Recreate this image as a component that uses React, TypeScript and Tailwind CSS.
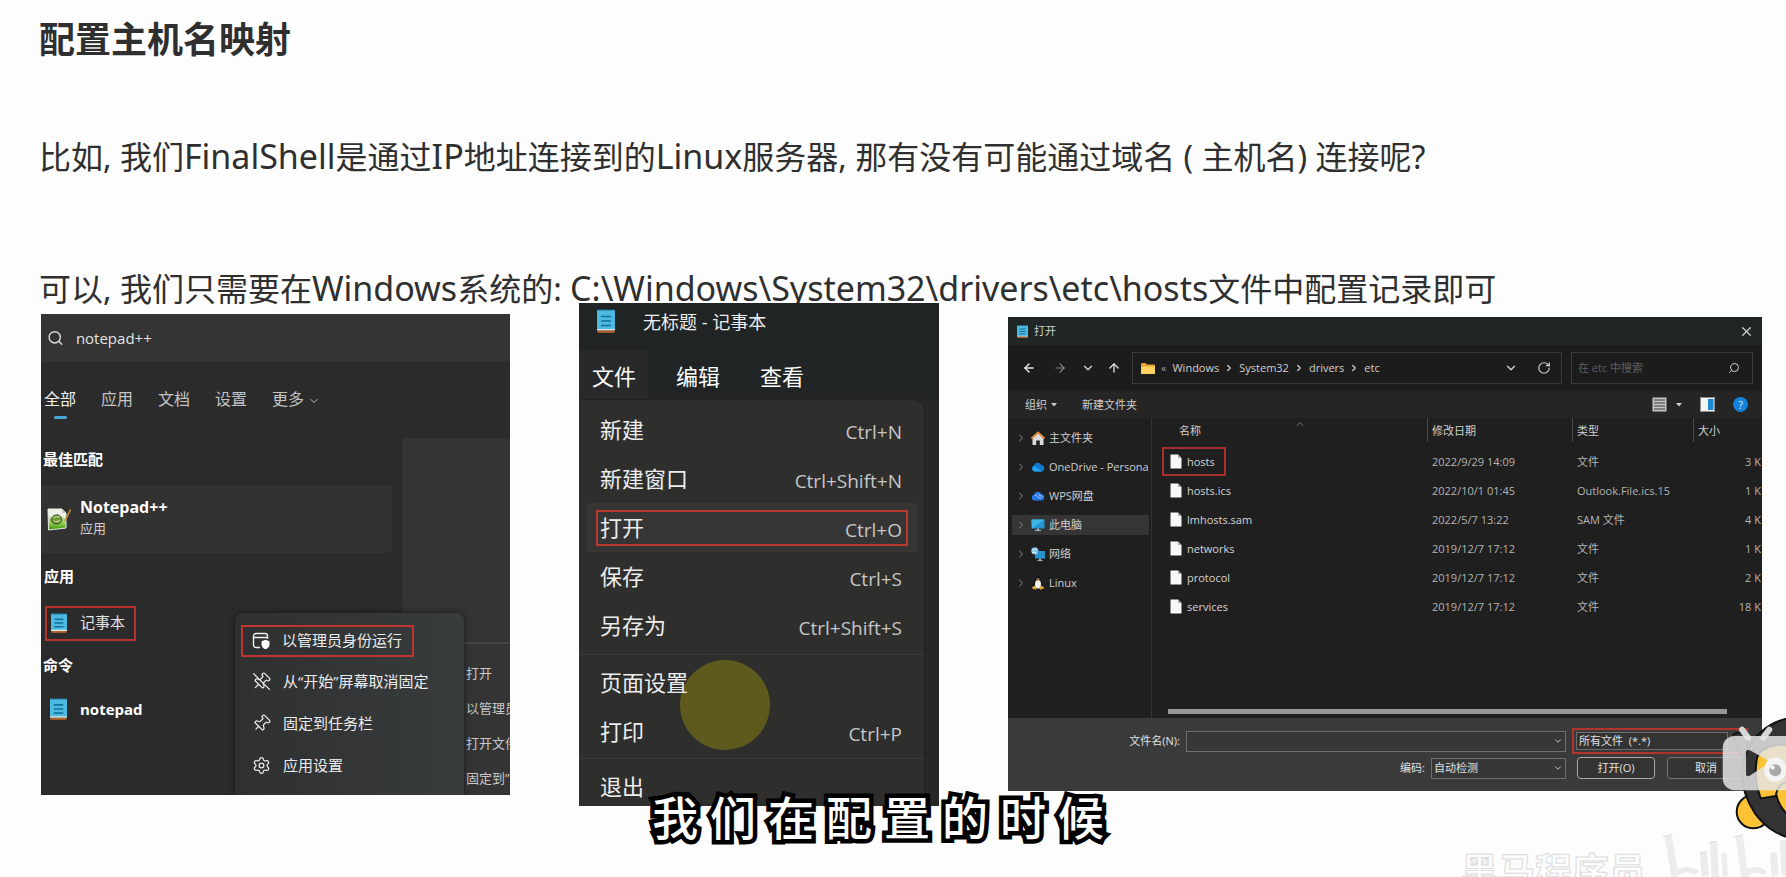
import type { ReactNode } from "react";
import {
  ArrowLeft,
  ArrowRight,
  ArrowUp,
  ChevronDown,
  ChevronRight,
  ChevronUp,
  Pin,
  RotateCw,
  Search,
  Settings,
  X,
} from "lucide-react";

const uiFont = "font-['Open_Sans','Noto_Sans_CJK_SC',sans-serif]";

function NotepadIcon({ className }: { className: string }) {
  return (
    <svg viewBox="0 0 18 24" className={className} preserveAspectRatio="none" aria-hidden="true">
      <rect x="0" y="1" width="18" height="20" fill="#4db8e0" />
      <rect x="0" y="20" width="18" height="1.6" fill="#d9e6ea" />
      <rect x="0.5" y="21.6" width="17" height="2.2" fill="#b5652b" />
      <path d="M1 1h16" stroke="#176f97" strokeWidth="2" strokeDasharray="1.4 1.6" />
      <path d="M4 7.5h10M4 12h10M4 16.5h10" stroke="#12709c" strokeWidth="1.7" />
    </svg>
  );
}

function NotepadPlusIcon() {
  return (
    <svg viewBox="0 0 24 24" className="h-6 w-6" aria-hidden="true">
      <defs>
        <linearGradient id="npp" x1="0" y1="0" x2="0" y2="1">
          <stop offset="0.3" stopColor="#eef2ea" />
          <stop offset="0.75" stopColor="#7ec23a" />
          <stop offset="1" stopColor="#2f8d14" />
        </linearGradient>
      </defs>
      <path d="M1 2h14l4 4v15L1.500 23z" fill="url(#npp)" stroke="#e8ebe4" strokeWidth="1" />
      <path d="M15 2l4 4h-4z" fill="#bfc8ba" />
      <path d="M4 13c1-5 7-7 10-3 2 3 0 7-4 7-3 0-5-1-6-4z" fill="#6f9b35" stroke="#3c4f20" strokeWidth="1" />
      <path d="M6 11c2-1 4-2 7-1M7 14c2 1 4 1 6-1" stroke="#dce8c8" strokeWidth="1" fill="none" />
      <path d="M23.500 2.500L18 14" stroke="#c98a2b" strokeWidth="1.600" />
    </svg>
  );
}

function AdminIcon() {
  return (
    <svg viewBox="0 0 18 18" className="h-[18px] w-[18px]" fill="none" stroke="#f0f0f0" strokeWidth="1.4" aria-hidden="true">
      <path d="M8 15.500H4A2.500 2.500 0 0 1 1.500 13V4A2.500 2.500 0 0 1 4 1.500h9A2.500 2.500 0 0 1 15.500 4v3M1.500 5.500h14" />
      <path d="M13.500 7.800l4 1.400v3.200c0 2.300-1.700 3.900-4 4.800-2.300-.9-4-2.500-4-4.800V9.200z" fill="#fff" stroke="none" />
    </svg>
  );
}

function UnpinIcon() {
  return (
    <svg
      viewBox="0 0 24 24"
      className="h-[19px] w-[19px]"
      fill="none"
      stroke="currentColor"
      strokeWidth="1.6"
      strokeLinecap="round"
      strokeLinejoin="round"
      aria-hidden="true"
    >
      <g transform="rotate(45 12 12)">
        <path d="M12 17v6" />
        <path d="M9 10.760a2 2 0 0 1-1.110 1.790l-1.780.9A2 2 0 0 0 5 15.240V16a1 1 0 0 0 1 1h12a1 1 0 0 0 1-1v-.76a2 2 0 0 0-1.110-1.790l-1.780-.9A2 2 0 0 1 15 10.760V7a1 1 0 0 1 1-1 2 2 0 0 0 0-4H8a2 2 0 0 0 0 4 1 1 0 0 1 1 1z" />
      </g>
      <path d="M2 2l20 20" />
    </svg>
  );
}

function FileIcon() {
  return (
    <svg viewBox="0 0 12 15" className="h-[15px] w-3 shrink-0" aria-hidden="true">
      <path d="M0.500 0.500h7.500l3.500 3.500v10.500h-11z" fill="#f7f7f7" />
      <path d="M8 0.500v3.500h3.500z" fill="#a9a9a9" />
    </svg>
  );
}

function HomeIcon() {
  return (
    <svg viewBox="0 0 14 14" className="h-3.5 w-3.5" aria-hidden="true">
      <path d="M1.500 6.500L7 2l5.500 4.500V14H8.800V9.500H5.200V14H1.500z" fill="#dcdcdc" />
      <path d="M0.500 7.500L7 1.500l6.500 6" fill="none" stroke="#e08a3a" strokeWidth="2" />
    </svg>
  );
}

function CloudIcon() {
  return (
    <svg viewBox="0 0 14 10" className="h-2.5 w-3.5" aria-hidden="true">
      <path d="M3.500 9.500a3 3 0 0 1-.6-5.900A4 4 0 0 1 10.300 3a3.300 3.300 0 0 1 .4 6.500z" fill="#1179cf" />
      <path d="M3.500 9.500a3 3 0 0 1 0-5.500l7.500 5.500z" fill="#28a0ea" />
    </svg>
  );
}

function WpsIcon() {
  return (
    <svg viewBox="0 0 14 10" className="h-2.5 w-3.5" aria-hidden="true">
      <path d="M3.500 9.500a3 3 0 0 1-.6-5.900A4 4 0 0 1 10.300 3a3.300 3.300 0 0 1 .4 6.500z" fill="#2478e8" />
      <path d="M4 4.500c2-1 3 3 6 2.500M7 2.500c1 2 3 2 5 3.500" fill="none" stroke="#a8d0ff" strokeWidth="1" />
    </svg>
  );
}

function MonitorIcon() {
  return (
    <svg viewBox="0 0 14 12" className="h-3 w-3.5" aria-hidden="true">
      <rect x="0.500" y="0.500" width="13" height="9" rx="0.500" fill="#2493cf" />
      <path d="M0.500 0.500h13L1 9.500z" fill="#3db4e4" />
      <path d="M6 9.500h2v1.500h2v1H4v-1h2z" fill="#9fb7c2" />
    </svg>
  );
}

function NetworkIcon() {
  return (
    <svg viewBox="0 0 14 14" className="h-3.5 w-3.5" aria-hidden="true">
      <rect x="4" y="4" width="10" height="7.500" fill="#2493cf" />
      <path d="M8 11.500h2v1.500h1.500v1h-5v-1H8z" fill="#9fb7c2" />
      <circle cx="3.800" cy="3.800" r="3.600" fill="#7fc0e4" />
      <path d="M1 2.500c2 1 3 0 5-.5M1 5.500l3-.5 1 2" stroke="#e8f5fb" strokeWidth="1" fill="none" />
    </svg>
  );
}

function TuxIcon() {
  return (
    <svg viewBox="0 0 14 14" className="h-3.5 w-3.5" aria-hidden="true">
      <path d="M7 0.500c1.800 0 2.300 1.500 2.300 3.200 0 1.600 2.200 3.300 2.200 6.300 0 2-2 3-4.500 3s-4.500-1-4.500-3c0-3 2.200-4.700 2.200-6.300C4.700 2 5.200 0.500 7 0.500z" fill="#0c0c0c" />
      <ellipse cx="7" cy="8.200" rx="3" ry="4.300" fill="#f2f2f2" />
      <path d="M5.500 3.800h3L7 5.800z" fill="#f0b429" />
      <path d="M0.500 12l3-2.500 2.300 3-1 1.200zM13.500 12l-3-2.500-2.300 3 1 1.200z" fill="#e8ab2e" />
      <circle cx="6.200" cy="2.800" r="0.600" fill="#fff" />
      <circle cx="7.800" cy="2.800" r="0.600" fill="#fff" />
    </svg>
  );
}

function FolderIcon() {
  return (
    <svg viewBox="0 0 14 11" className="h-[11px] w-3.5" aria-hidden="true">
      <path d="M0 1a1 1 0 0 1 1-1h3.500L6 1.500h7a1 1 0 0 1 1 1V10a1 1 0 0 1-1 1H1a1 1 0 0 1-1-1z" fill="#e0a52f" />
      <path d="M0 3.500h14V10a1 1 0 0 1-1 1H1a1 1 0 0 1-1-1z" fill="#fbd160" />
    </svg>
  );
}

function Triangle() {
  return (
    <svg viewBox="0 0 6 4" className="h-1 w-1.5" aria-hidden="true">
      <path d="M0 0h6L3 3.500z" fill="#cfcfcf" />
    </svg>
  );
}

const tabs = ["应用", "文档", "设置"];

function PopupItem({ icon, label }: { icon: ReactNode; label: string }) {
  return (
    <button type="button" className="flex h-[42px] w-full items-center gap-3 whitespace-nowrap pl-[17px] text-left">
      {icon}
      {label}
    </button>
  );
}

function SearchPanel() {
  return (
    <section className={`relative mt-[11px] h-[481px] overflow-hidden bg-[#2b2b2b] text-[15px] text-[#e3e3e3] ${uiFont}`}>
      <label className="flex h-12 items-center gap-3 bg-[#343434] pl-1.5">
        <Search className="h-[18px] w-[18px] text-[#dcdcdc]" strokeWidth={2} />
        <input aria-label="搜索" defaultValue="notepad++" className="w-full bg-transparent text-[15px] font-medium outline-none" />
      </label>
      <nav className="mt-6 flex gap-[25px] pl-[3px] text-base leading-[26px] text-[#c4c4c4]">
        <button type="button" className="flex flex-col items-center gap-1 text-[#f2f2f2]">
          全部
          <span className="h-[3px] w-[13px] rounded-full bg-[#4aa8d8]" />
        </button>
        {tabs.map((tab) => (
          <button key={tab} type="button" className="self-start">
            {tab}
          </button>
        ))}
        <button type="button" className="flex items-center gap-1 self-start">
          更多
          <ChevronDown className="mt-1 h-3 w-3" strokeWidth={2} />
        </button>
      </nav>

      <div className="mt-[19px] flex">
        <div className="w-[351px] shrink-0 pt-2.5">
          <h2 className="pl-0.5 font-bold leading-[22px] text-white">最佳匹配</h2>
          <button type="button" className="mt-[15px] flex h-[68px] w-full items-center gap-[9px] rounded-r bg-[#323232] pl-1.5 text-left">
            <NotepadPlusIcon />
            <span className="pb-1">
              <span className="block text-base font-bold leading-[22px] text-white">Notepad++</span>
              <span className="block text-[13px] leading-5 text-[#cfcfcf]">应用</span>
            </span>
          </button>
          <h2 className="mt-3 pl-[3px] font-bold leading-[22px] text-white">应用</h2>
          <button type="button" className="ml-1 mt-[19px] flex h-[35px] w-[91px] items-center gap-[13px] border-2 border-[#b8322d] pb-0.5 pl-1">
            <NotepadIcon className="h-5 w-4" />
            记事本
          </button>
          <h2 className="mt-[13px] pl-0.5 font-bold leading-[22px] text-white">命令</h2>
          <button type="button" className="mt-4 flex h-[34px] items-center gap-[13px] pl-[9px] font-bold text-white">
            <NotepadIcon className="h-[22px] w-[17px]" />
            notepad
          </button>
        </div>
        <div className="ml-2.5 h-[357px] flex-1 overflow-hidden whitespace-nowrap rounded-tl bg-[#343434]">
          <div className="h-[206px] border-b-2 border-[#434343]" />
          <ul className="mt-3 pl-[64px] text-[13px] leading-[35px] text-[#c8c8c8]">
            <li>打开</li>
            <li>以管理员</li>
            <li>打开文件</li>
            <li>固定到”</li>
          </ul>
        </div>
      </div>

      <div className="absolute left-[194px] top-[299px] h-[190px] w-[229px] rounded-lg bg-gradient-to-r from-[#2f3030] to-[#383c3d] pt-[7px] text-[#ececec] shadow-[0_0_6px_rgba(0,0,0,0.5)]">
        <button type="button" className="mb-[3px] ml-1.5 mt-[5px] flex h-8 w-[173px] items-center gap-3 whitespace-nowrap border-2 border-[#c0352f] pb-px pl-[9px]">
          <AdminIcon />
          以管理员身份运行
        </button>
        <PopupItem icon={<UnpinIcon />} label="从“开始”屏幕取消固定" />
        <PopupItem icon={<Pin className="h-[19px] w-[19px] rotate-45" strokeWidth={1.6} />} label="固定到任务栏" />
        <PopupItem icon={<Settings className="h-[19px] w-[19px]" strokeWidth={1.6} />} label="应用设置" />
      </div>
    </section>
  );
}

function MenuItem({ label, keys }: { label: string; keys?: string }) {
  return (
    <button type="button" className="flex h-[49px] w-full items-center justify-between pl-[21px] pr-[22px]">
      <span>{label}</span>
      <span className="pt-1.5 text-[19px] text-[#c6c6c6]">{keys}</span>
    </button>
  );
}

function NotepadPanel() {
  return (
    <section className={`relative h-[503px] overflow-hidden bg-[#202425] text-[22px] text-[#ededed] ${uiFont}`}>
      <header className="flex h-[47px] items-start gap-7 pl-[18px] pt-1.5 text-lg leading-[26px]">
        <NotepadIcon className="h-6 w-[18px]" />
        <span>无标题 - 记事本</span>
      </header>
      <nav className="flex h-[49px] gap-10 text-[22px] text-white">
        <button type="button" className="-mr-3 bg-[#27292b] pl-[13px] pr-3 pt-1">
          文件
        </button>
        <button type="button" className="pt-1">
          编辑
        </button>
        <button type="button" className="pt-1">
          查看
        </button>
      </nav>
      <div className="h-full bg-[#272727] pr-3.5">
        <div className="relative h-full rounded-tr-xl border-r border-t border-[#222] bg-[#2e2e2d] pt-[5px]">
          <span className="absolute left-[101px] top-[260px] h-[90px] w-[90px] rounded-full bg-[#5e5a1e]" />
          <div className="relative">
            <MenuItem label="新建" keys="Ctrl+N" />
            <MenuItem label="新建窗口" keys="Ctrl+Shift+N" />
            <div className="ml-[7px] mr-1.5 flex h-[49px] items-center rounded bg-[#353535] px-2.5">
              <button type="button" className="flex h-9 w-full items-center justify-between border-2 border-[#bd3a32] pl-0.5 pr-1">
                <span>打开</span>
                <span className="pt-1.5 text-[19px] text-[#c6c6c6]">Ctrl+O</span>
              </button>
            </div>
            <MenuItem label="保存" keys="Ctrl+S" />
            <MenuItem label="另存为" keys="Ctrl+Shift+S" />
            <hr className="mt-1 border-[#3b3b3b]" />
            <div className="pt-[3px]">
              <MenuItem label="页面设置" />
              <MenuItem label="打印" keys="Ctrl+P" />
            </div>
            <hr className="mt-0.5 border-[#3b3b3b]" />
            <div className="pt-[3px]">
              <MenuItem label="退出" />
            </div>
          </div>
        </div>
      </div>
    </section>
  );
}

const places = [
  { label: "主文件夹", icon: <HomeIcon /> },
  { label: "OneDrive - Persona", icon: <CloudIcon /> },
  { label: "WPS网盘", icon: <WpsIcon /> },
  { label: "此电脑", icon: <MonitorIcon />, active: true },
  { label: "网络", icon: <NetworkIcon /> },
  { label: "Linux", icon: <TuxIcon /> },
];

const files = [
  { name: "hosts", date: "2022/9/29 14:09", type: "文件", size: "3 K", marked: true },
  { name: "hosts.ics", date: "2022/10/1 01:45", type: "Outlook.File.ics.15", size: "1 K" },
  { name: "lmhosts.sam", date: "2022/5/7 13:22", type: "SAM 文件", size: "4 K" },
  { name: "networks", date: "2019/12/7 17:12", type: "文件", size: "1 K" },
  { name: "protocol", date: "2019/12/7 17:12", type: "文件", size: "2 K" },
  { name: "services", date: "2019/12/7 17:12", type: "文件", size: "18 K" },
];

const crumbs = ["Windows", "System32", "drivers", "etc"];

function OpenDialog() {
  return (
    <section className={`mt-3.5 flex h-[474px] flex-col overflow-hidden bg-[#1f1f1f] text-[11px] leading-4 text-[#cfcfcf] ${uiFont}`}>
      <header className="flex h-7 shrink-0 items-center bg-[#202526] pl-[9px] pr-2">
        <NotepadIcon className="h-[13px] w-[11px]" />
        <span className="ml-1.5 flex-1">打开</span>
        <button type="button" aria-label="关闭">
          <X className="h-[15px] w-[15px]" strokeWidth={2} />
        </button>
      </header>

      <div className="flex h-[46px] shrink-0 items-center bg-[#1c1c1c] pl-3.5 pr-[9px]">
        <button type="button" aria-label="后退">
          <ArrowLeft className="h-3.5 w-3.5 text-[#e8e8e8]" strokeWidth={2.4} />
        </button>
        <button type="button" aria-label="前进" className="ml-[17px]">
          <ArrowRight className="h-3.5 w-3.5 text-[#8a8a8a]" strokeWidth={2} />
        </button>
        <button type="button" aria-label="最近" className="ml-3.5">
          <ChevronDown className="h-3.5 w-3.5" strokeWidth={2.4} />
        </button>
        <button type="button" aria-label="向上" className="ml-3">
          <ArrowUp className="h-3.5 w-3.5 text-[#e8e8e8]" strokeWidth={2.2} />
        </button>
        <div className="ml-[11px] flex h-8 flex-1 items-center border border-[#3b3b3b] pl-2 pr-2.5">
          <FolderIcon />
          <span className="ml-1.5 mr-1.5 text-[#9a9a9a]">«</span>
          {crumbs.map((crumb, index) => (
            <span key={crumb} className="flex items-center font-medium">
              {index > 0 && <ChevronRight className="mx-[5px] h-2.5 w-2.5" strokeWidth={3} />}
              {crumb}
            </span>
          ))}
          <button type="button" aria-label="展开" className="ml-auto">
            <ChevronDown className="h-3.5 w-3.5" strokeWidth={2.4} />
          </button>
          <button type="button" aria-label="刷新" className="ml-[19px]">
            <RotateCw className="h-3.5 w-3.5" strokeWidth={2} />
          </button>
        </div>
        <label className="ml-[9px] flex h-8 w-[182px] items-center border border-[#3b3b3b] pl-1.5 pr-3">
          <input aria-label="搜索" placeholder="在 etc 中搜索" className="w-full min-w-0 bg-transparent outline-none placeholder:text-[#5f5f5f]" />
          <Search className="h-3 w-3 shrink-0 -scale-x-100" strokeWidth={2} />
        </label>
      </div>

      <div className="flex h-[27px] shrink-0 items-center bg-[#252525] pl-[17px] pr-3.5">
        <button type="button" className="flex items-center gap-1">
          组织 <Triangle />
        </button>
        <button type="button" className="ml-[25px]">
          新建文件夹
        </button>
        <button type="button" aria-label="视图" className="ml-auto flex items-center gap-[9px]">
          <svg viewBox="0 0 15 15" className="h-[15px] w-[15px]" aria-hidden="true">
            <rect x="0.500" y="0.500" width="14" height="14" fill="#c4c4c4" />
            <path d="M2 3h11M2 6h11M2 9h11M2 12h11" stroke="#3a3a3a" strokeWidth="1" />
          </svg>
          <Triangle />
        </button>
        <button type="button" aria-label="预览窗格" className="ml-[18px]">
          <svg viewBox="0 0 15 15" className="h-[15px] w-[15px]" aria-hidden="true">
            <rect x="0.500" y="0.500" width="14" height="14" fill="#f5f5f5" stroke="#8f8f8f" />
            <rect x="8" y="2" width="5.500" height="11" fill="#1c86d1" />
          </svg>
        </button>
        <button type="button" aria-label="帮助" className="ml-[18px] h-[15px] w-[15px] rounded-full bg-[#1382dc] leading-[15px] text-[#d8ecfb]">
          ?
        </button>
      </div>

      <div className="flex flex-1">
        <ul className="w-[144px] shrink-0 border-r border-[#333] pt-[5px]">
          {places.map((place) => (
            <li key={place.label} className="flex h-[29px] items-center pl-1 pr-0.5">
              <button
                type="button"
                className={`flex h-5 w-full items-center overflow-hidden whitespace-nowrap pl-[3px] ${place.active ? "bg-[#353535]" : ""}`}
              >
                <ChevronRight className="h-3 w-3 shrink-0 text-[#8b8b8b]" strokeWidth={2} />
                <span className="ml-1 mr-1 flex w-3.5 shrink-0 justify-center">{place.icon}</span>
                {place.label}
              </button>
            </li>
          ))}
        </ul>
        <div className="relative flex min-w-0 flex-1 flex-col">
          <ChevronUp className="absolute left-[142px] top-0 h-3 w-3 text-[#8f8f8f]" strokeWidth={1.6} />
          <table className="w-full table-fixed border-collapse">
            <colgroup>
              <col />
              <col className="w-[145px]" />
              <col className="w-[121px]" />
              <col className="w-[69px]" />
            </colgroup>
            <thead>
              <tr className="text-left">
                <th className="h-[29px] p-0 align-top font-normal">
                  <div className="flex h-6 items-center pl-[27px] pt-0.5">名称</div>
                </th>
                {["修改日期", "类型", "大小"].map((heading) => (
                  <th key={heading} className="p-0 align-top font-normal">
                    <div className="flex h-6 items-center border-l border-[#4a4a4a] pl-1 pt-0.5">{heading}</div>
                  </th>
                ))}
              </tr>
            </thead>
            <tbody className="text-[#b4b4b4]">
              {files.map((file) => (
                <tr key={file.name}>
                  <td className="p-0">
                    <span
                      className={`ml-2.5 flex h-[29px] w-fit items-center gap-[5px] border-2 pl-1.5 pr-[9px] text-[#d4d4d4] ${
                        file.marked ? "border-[#a82e2b]" : "border-transparent"
                      }`}
                    >
                      <FileIcon />
                      {file.name}
                    </span>
                  </td>
                  <td className="p-0 pl-[5px]">{file.date}</td>
                  <td className="p-0 pl-[5px]">{file.type}</td>
                  <td className="p-0 pr-px text-right">{file.size}</td>
                </tr>
              ))}
            </tbody>
          </table>
          <div className="mb-1 ml-4 mr-[35px] mt-auto h-[5px] bg-[#979797]" />
        </div>
      </div>

      <footer className="h-[73px] shrink-0 bg-[#3a3a3a] pt-2.5 text-[#e0e0e0]">
        <div className="flex h-[26px] items-center pr-3.5">
          <label htmlFor="file-name" className="w-[172px] text-right">
            文件名(N):
          </label>
          <div className="ml-1.5 flex h-[21px] flex-1 items-center border border-[#6e6e6e] bg-[#373737] pr-0.5">
            <input id="file-name" className="w-full min-w-0 bg-transparent px-1 outline-none" />
            <ChevronDown className="h-2.5 w-2.5 shrink-0" strokeWidth={2} />
          </div>
          <div className="ml-1.5 h-[26px] w-[176px] border-2 border-[#b2322e] p-0.5 pr-[18px]">
            <select aria-label="文件类型" className="block h-full w-full appearance-none border border-[#6e6e6e] bg-[#333] pl-0.5 leading-4">
              <option>所有文件&nbsp; (*.*)</option>
            </select>
          </div>
        </div>
        <div className="mt-[3px] flex h-[22px] items-center justify-end pr-[17px]">
          <label htmlFor="encoding">编码:</label>
          <div className="ml-1.5 flex h-[21px] w-[135px] items-center border border-[#6e6e6e] bg-[#373737] pr-0.5">
            <select id="encoding" className="w-full appearance-none bg-transparent pl-0.5">
              <option>自动检测</option>
            </select>
            <ChevronDown className="h-2.5 w-2.5 shrink-0" strokeWidth={2} />
          </div>
          <button type="button" className="ml-[11px] h-[22px] w-[78px] rounded border border-[#a8a8a8] bg-[#333]">
            打开(O)
          </button>
          <button type="button" className="ml-3 h-[22px] w-[78px] rounded border border-[#777] bg-[#333]">
            取消
          </button>
        </div>
      </footer>
    </section>
  );
}

function Mascot() {
  return (
    <svg viewBox="840 80 198 370" className="absolute right-0 top-[717px] h-[123px] w-[66px]" aria-hidden="true">
      <circle cx="940" cy="365" r="50" fill="#fbc235" stroke="#111" strokeWidth="6" />
      <path d="M1050 83C985 95 935 140 915 195c-20 60-5 120 30 175 30 40 60 60 105 74z" fill="#333" stroke="#111" strokeWidth="6" />
      <path d="M925 140c-15-14-32-16-45-8 5 30 12 55 35 72z" fill="#333" stroke="#111" strokeWidth="5" />
      <path d="M1050 165c-45-5-85 5-98 35-10 45-2 90 10 125l48-8c5 22 15 42 40 62z" fill="#fbc235" stroke="#111" strokeWidth="6" />
      <path d="M1008 318c2-28 15-40 40-45" fill="none" stroke="#111" strokeWidth="6" />
      <path d="M906 118l18 24M988 118l-18 24" stroke="#d6d6d6" strokeWidth="18" strokeLinecap="round" />
      <path
        fillRule="evenodd"
        fill="#e6e6e6"
        fillOpacity="0.84"
        d="M883 137H1050V300H883a35 35 0 0 1-35-35V172a35 35 0 0 1 35-35zM918 188v62q0 12 11 7l54-36q6-5 0-11l-52-29q-13-5-13 7z"
      />
      <ellipse cx="1006" cy="238" rx="33" ry="37" fill="#f4f4f4" />
      <circle cx="1006" cy="240" r="18" fill="#a8a8a8" />
      <circle cx="998" cy="232" r="6" fill="#fff" />
    </svg>
  );
}

function SiteMark() {
  return (
    <svg viewBox="660 430 378 131" className="absolute bottom-0 right-0 h-[44px] w-[126px]" aria-hidden="true">
      <g fill="none" stroke="#ececec" strokeWidth="22">
        <path d="M684 438l22 123" />
        <path d="M706 556q30-30 66-6" strokeWidth="16" />
        <path d="M790 488l6 70M820 455l6 106" />
        <path d="M852 490l4 70" strokeWidth="16" />
        <path d="M898 438l16 123" />
        <path d="M914 556q30-30 62-6" strokeWidth="16" />
        <path d="M1000 488l6 70M1030 452l6 106" />
      </g>
      <path d="M667 442l30-9M880 442l30-8M780 490l20-4M808 458l20-4" stroke="#cfcfcf" strokeWidth="2" fill="none" />
    </svg>
  );
}

function Latin({ children }: { children: ReactNode }) {
  return <span className="text-[34px] leading-5">{children}</span>;
}

export default function App() {
  return (
    <main className="relative min-h-screen overflow-hidden bg-[#fdfdfd] pb-16 pl-[39px] pr-6 pt-4 font-['Noto_Sans','Noto_Sans_CJK_SC',sans-serif] text-[#2f2f2f]">
      <h1 className="text-4xl font-bold leading-[48px]">配置主机名映射</h1>
      <p className="mt-[79px] whitespace-nowrap text-[32px] leading-7">
        比如, 我们<Latin>FinalShell</Latin>是通过<Latin>IP</Latin>地址连接到的<Latin>Linux</Latin>服务器, 那有没有可能通过域名 ( 主机名) 连接呢?
      </p>
      <p className="mt-[104px] whitespace-nowrap text-[32px] leading-7">
        可以, 我们只需要在<Latin>Windows</Latin>系统的: <Latin>C:\Windows\System32\drivers\etc\hosts</Latin>文件中配置记录即可
      </p>
      <div className="relative grid grid-cols-[469fr_360fr_754fr] items-start gap-x-[69px] pl-0.5">
        <SearchPanel />
        <NotepadPanel />
        <OpenDialog />
      </div>

      <p className="absolute -bottom-3 right-[140px] whitespace-nowrap text-[37px] font-bold leading-9 text-[#fdfdfd] [-webkit-text-stroke:1px_#dcdcdc]">
        黑马程序员
      </p>
      <SiteMark />
      <Mascot />
      <p className="absolute inset-x-0 bottom-8 pr-[30px] text-center text-[46px] font-medium leading-[56px] text-white [-webkit-text-stroke:9px_#000] [paint-order:stroke_fill]">
        我 们 在 配 置 的 时 候
      </p>
    </main>
  );
}
